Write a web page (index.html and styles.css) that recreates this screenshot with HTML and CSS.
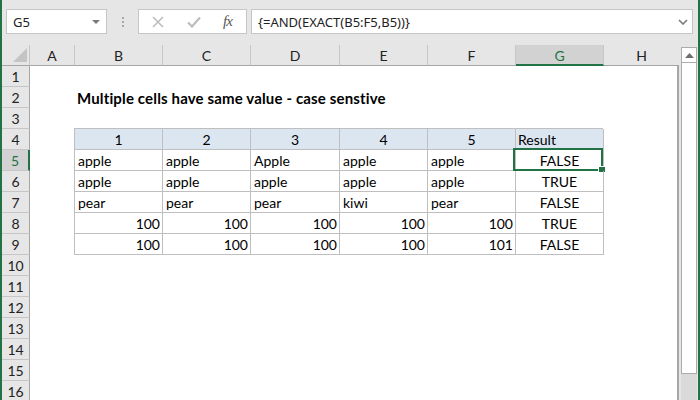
FILE: index.html
```html
<!DOCTYPE html>
<html>
<head>
<meta charset="utf-8">
<link rel="stylesheet" href="styles.css">
</head>
<body>
<div class="app">
  <div class="fbar">
    <div class="namebox">
      <span class="nb-text">G5</span>
      <svg class="nb-arrow" width="8" height="4" viewBox="0 0 8 4"><path d="M0 0H8L4 4Z" fill="#7a7a7a"/></svg>
    </div>
    <div class="dots"><i></i><i></i><i></i></div>
    <div class="fbtns">
      <svg class="ico x" width="12" height="12" viewBox="0 0 12 12"><path d="M1 1L11 11M11 1L1 11" stroke="#bdbdbd" stroke-width="1.6" fill="none"/></svg>
      <svg class="ico ok" width="14" height="12" viewBox="0 0 14 12"><path d="M1 6.5L5 10.5L13 1.5" stroke="#bdbdbd" stroke-width="2.2" fill="none"/></svg>
      <span class="fx">fx</span>
    </div>
    <div class="formula">
      <span class="f-text">{=AND(EXACT(B5:F5,B5))}</span>
      <svg class="chev" width="10" height="6" viewBox="0 0 10 6"><path d="M1 1L5 5L9 1" stroke="#7a7a7a" stroke-width="1.6" fill="none"/></svg>
    </div>
  </div>
  <div class="main">
    <div class="sheet">
      <div class="colheads">
        <div class="corner"><svg width="14" height="14" viewBox="0 0 14 14"><path d="M14 0V14H0Z" fill="#c4c4c4"/></svg></div>
        <div class="ch w45">A</div>
        <div class="ch w88">B</div>
        <div class="ch w88">C</div>
        <div class="ch w89">D</div>
        <div class="ch w88">E</div>
        <div class="ch w88">F</div>
        <div class="ch w88 sel">G</div>
        <div class="ch rest">H</div>
      </div>
      <div class="body">
        <div class="rowheads">
          <div class="rh">1</div>
          <div class="rh">2</div>
          <div class="rh">3</div>
          <div class="rh">4</div>
          <div class="rh sel">5</div>
          <div class="rh">6</div>
          <div class="rh">7</div>
          <div class="rh">8</div>
          <div class="rh">9</div>
          <div class="rh">10</div>
          <div class="rh">11</div>
          <div class="rh">12</div>
          <div class="rh">13</div>
          <div class="rh">14</div>
          <div class="rh">15</div>
          <div class="rh">16</div>
        </div>
        <div class="cells">
          <div class="blank"></div>
          <div class="title">Multiple cells have same value - case senstive</div>
          <div class="blank short"></div>
          <div class="tbl">
            <div class="c hd ctr">1</div>
            <div class="c hd ctr">2</div>
            <div class="c hd ctr">3</div>
            <div class="c hd ctr">4</div>
            <div class="c hd ctr">5</div>
            <div class="c hd">Result</div>

            <div class="c">apple</div>
            <div class="c">apple</div>
            <div class="c">Apple</div>
            <div class="c">apple</div>
            <div class="c">apple</div>
            <div class="c ctr active">FALSE<span class="selbox"></span><span class="handle"></span></div>

            <div class="c">apple</div>
            <div class="c">apple</div>
            <div class="c">apple</div>
            <div class="c">apple</div>
            <div class="c">apple</div>
            <div class="c ctr">TRUE</div>

            <div class="c">pear</div>
            <div class="c">pear</div>
            <div class="c">pear</div>
            <div class="c">kiwi</div>
            <div class="c">pear</div>
            <div class="c ctr">FALSE</div>

            <div class="c num">100</div>
            <div class="c num">100</div>
            <div class="c num">100</div>
            <div class="c num">100</div>
            <div class="c num">100</div>
            <div class="c ctr">TRUE</div>

            <div class="c num">100</div>
            <div class="c num">100</div>
            <div class="c num">100</div>
            <div class="c num">100</div>
            <div class="c num">101</div>
            <div class="c ctr">FALSE</div>
          </div>
        </div>
      </div>
    </div>
    <div class="vscroll">
      <div class="up"><svg width="9" height="5" viewBox="0 0 9 5"><path d="M0 5H9L4.5 0Z" fill="#6e6e6e"/></svg></div>
      <div class="thumb"></div>
      <div class="track"></div>
    </div>
  </div>
</div>
</body>
</html>
```
FILE: styles.css
```css
* { box-sizing: border-box; margin: 0; padding: 0; }
html, body { width: 700px; height: 400px; overflow: hidden; background: #e6e6e6; }
body { font-family: Lato, "Liberation Sans", sans-serif; color: #000; }

.app {
  height: 400px;
  border-left: 2px solid #217346;
  border-right: 2px solid #217346;
  display: flex;
  flex-direction: column;
  background: #e6e6e6;
}

/* formula bar */
.fbar {
  height: 45px;
  flex: none;
  display: flex;
  align-items: flex-start;
  padding: 9px 5px 0 4px;
}
.namebox {
  width: 101px;
  height: 25px;
  background: #fff;
  border: 1px solid #c6c6c6;
  display: flex;
  align-items: center;
  justify-content: space-between;
  padding: 0 6px 0 6px;
  font-family: "Noto Sans", "Open Sans", sans-serif;
  font-size: 13px;
  color: #222;
}
.dots {
  width: 31px;
  height: 25px;
  display: flex;
  flex-direction: column;
  align-items: center;
  justify-content: center;
  gap: 2px;
}
.dots i { display: block; width: 2px; height: 2px; background: #a8a8a8; }
.fbtns {
  width: 109px;
  height: 25px;
  background: #fff;
  border: 1px solid #c6c6c6;
  display: flex;
  align-items: center;
  padding: 0 0 0 13px;
}
.ico { flex: none; }
.ico.ok { margin-left: 23px; }
.fx {
  margin-left: 22px;
  font-family: "Liberation Serif", "DejaVu Serif", serif;
  font-style: italic;
  font-size: 15px;
  color: #555;
  letter-spacing: -1px;
}
.formula {
  flex: 1;
  margin-left: 4px;
  height: 25px;
  background: #fff;
  border: 1px solid #c6c6c6;
  display: flex;
  align-items: center;
  justify-content: space-between;
  padding: 0 4px 0 6px;
  font-family: "Noto Sans", "Open Sans", sans-serif;
  font-size: 13px;
  color: #222;
}

/* main */
.main { flex: 1; display: flex; min-height: 0; }
.sheet { width: 677px; flex: none; display: flex; flex-direction: column; min-height: 0; }

.colheads { height: 21px; flex: none; display: flex; }
.corner {
  width: 28px;
  border-right: 1px solid #c6c6c6;
  border-bottom: 1px solid #a6a6a6;
  display: flex;
  align-items: flex-end;
  justify-content: flex-end;
  padding: 0 2px 3px 0;
}
.ch {
  border-right: 1px solid #c6c6c6;
  border-bottom: 1px solid #a6a6a6;
  display: flex;
  align-items: center;
  justify-content: center;
  font-size: 14px;
  color: #222;
  padding-top: 1px;
}
.w45 { width: 45px; }
.w88 { width: 88px; }
.w89 { width: 89px; }
.ch.rest { flex: 1; border-right: none; }
.ch.sel {
  background: #d2d2d2;
  border-bottom: 2px solid #217346;
  color: #217346;
  padding-top: 2px;
}

.body { flex: 1; display: flex; min-height: 0; overflow: hidden; }
.rowheads { width: 28px; flex: none; }
.rh {
  height: 21px;
  border-right: 1px solid #a6a6a6;
  border-bottom: 1px solid #c6c6c6;
  display: flex;
  align-items: center;
  justify-content: center;
  font-size: 14px;
  color: #222;
  padding-top: 1px;
}
.rh.sel {
  background: #d2d2d2;
  border-right: 2px solid #217346;
  color: #217346;
}

.cells {
  flex: 1;
  background: #fff;
  border-right: 2px solid #a6a6a6;
}
.blank { height: 21px; }
.blank.short { height: 20px; }
.title {
  height: 21px;
  padding-left: 47px;
  padding-top: 2px;
  font-weight: bold;
  font-size: 15px;
  letter-spacing: 0.15px;
  white-space: nowrap;
}
.tbl {
  margin-left: 44px;
  display: grid;
  grid-template-columns: 88px 88px 89px 88px 88px 88px;
  grid-auto-rows: 21px;
  width: 529px;
  border-left: 1px solid #bfbfbf;
  border-top: 1px solid #bfbfbf;
}
.c {
  position: relative;
  border-right: 1px solid #bfbfbf;
  border-bottom: 1px solid #bfbfbf;
  font-size: 14px;
  line-height: 20px;
  padding: 1px 3px 0 3px;
  white-space: nowrap;
}
.c.hd { background: #dce6f1; }
.c.ctr { text-align: center; }
.c.hd:not(.ctr) { padding-left: 2px; }
.c.num { text-align: right; padding-right: 2px; }
.selbox {
  position: absolute;
  left: -3px;
  top: -2px;
  width: 90px;
  height: 23px;
  border: 2px solid #217346;
}
.handle {
  position: absolute;
  left: 83px;
  top: 17px;
  width: 6px;
  height: 5px;
  background: #217346;
  outline: 1px solid #fff;
}

/* scrollbar */
.vscroll {
  width: 19px;
  flex: none;
  padding: 2px 1px 0 2px;
  display: flex;
  flex-direction: column;
}
.up {
  height: 16px;
  background: #fff;
  border: 1px solid #ababab;
  display: flex;
  align-items: center;
  justify-content: center;
}
.thumb {
  height: 311px;
  background: #fff;
  border: 1px solid #ababab;
  border-top: none;
}
.track { flex: 1; background: #dadada; }
```
